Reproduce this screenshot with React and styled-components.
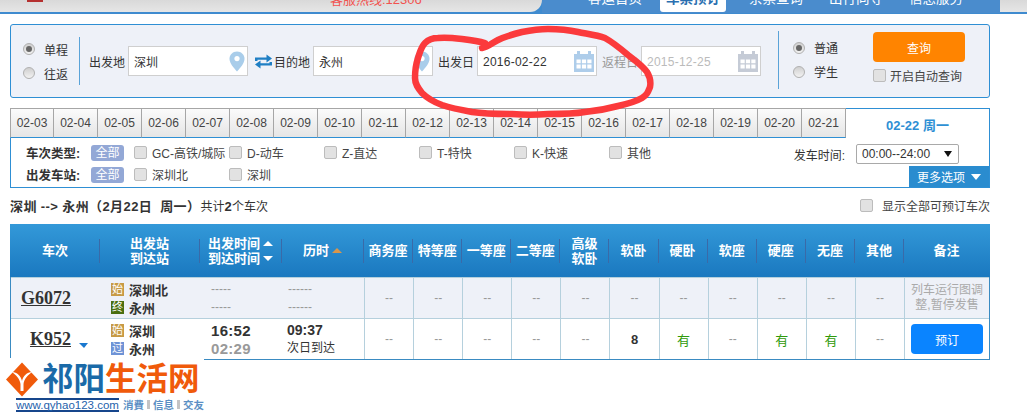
import React from 'react';
import styled, { createGlobalStyle } from 'styled-components';

const GlobalStyle = createGlobalStyle`
  html, body {
    margin: 0;
    padding: 0;
    background: #fff;
    overflow: hidden;
  }
  body {
    font-family: "Liberation Sans", "Noto Sans CJK SC", sans-serif;
    font-size: 12px;
    color: #333;
  }
  * { box-sizing: border-box; }
`;

const Page = styled.div`
  position: relative;
  width: 1027px;
  height: 418px;
  overflow: hidden;
`;

/* top bar, cut off by the top of the screenshot */
const TopBar = styled.div`
  display: flex;
  height: 14px;
  background: #3f8bcf;
`;
const Brand = styled.div`
  display: flex;
  width: 542px;
  height: 12px;
  background: linear-gradient(#d9d9d9, #e6e6e6);
  border-bottom-right-radius: 14px;
  overflow: hidden;
`;
const BrandMark = styled.span`
  width: 16px;
  height: 2px;
  margin-left: 27px;
  background: #b5302f;
`;
const Hotline = styled.span`
  display: block;
  margin: -10px 0 0 287px;
  font-size: 13px;
  line-height: 20px;
  color: #f2524f;
  white-space: nowrap;
`;
const Nav = styled.div`
  display: flex;
  flex: none;
  width: 458px;
  height: 13px;
  padding-left: 46px;
  gap: 26px;
  background: #4a8ccd;
`;
const NavItem = styled.div`
  height: ${p => (p.$active ? '12px' : '13px')};
  overflow: hidden;
  padding: ${p => (p.$active ? '0 6px' : '0')};
  margin: ${p => (p.$active ? '0 -3px 0 -8px' : '0')};
  background: ${p => (p.$active ? '#fff' : 'transparent')};
  border-radius: 0 0 3px 3px;
  color: ${p => (p.$active ? '#2a6fb0' : '#fff')};
  font-weight: ${p => (p.$active ? 'bold' : 'normal')};
  span {
    display: block;
    margin-top: -11px;
    font-size: 13.5px;
    line-height: 20px;
    white-space: nowrap;
  }
`;
const TopTail = styled.div`
  flex: 1;
  height: 12px;
  background: linear-gradient(#d9d9d9, #e6e6e6);
`;

const Content = styled.div`
  width: 980px;
  margin: 10px 0 0 10px;
`;

/* search panel */
const SearchPanel = styled.div`
  display: flex;
  align-items: center;
  height: 74px;
  background: #eef1f8;
  border: 1px solid #2e8fd4;
  border-radius: 3px;
`;
const RadioCol = styled.div`
  display: flex;
  flex: none;
  flex-direction: column;
  justify-content: center;
  gap: 11px;
  width: ${p => p.$width}px;
  height: ${p => p.$height}px;
  padding-left: ${p => p.$pad}px;
  margin-top: ${p => p.$top || 0}px;
  border-right: ${p => (p.$line ? '1px solid #5aa3d8' : '0')};
  border-left: ${p => (p.$lineLeft ? '1px solid #5aa3d8' : '0')};
  margin-left: ${p => p.$left || 0}px;
`;
const RadioRow = styled.label`
  display: flex;
  align-items: center;
  gap: 9px;
  height: 13px;
  font-size: 12px;
`;
const Radio = styled.span`
  display: flex;
  align-items: center;
  justify-content: center;
  width: 12px;
  height: 12px;
  border-radius: 50%;
  border: 1px solid #b0b0b0;
  background: linear-gradient(#cfcfcf, #f2f2f2);
  &::after {
    content: '';
    width: 6px;
    height: 6px;
    border-radius: 50%;
    background: ${p => (p.$on ? '#666' : 'transparent')};
  }
`;
const FieldLabel = styled.span`
  flex: none;
  width: 36px;
  margin-left: ${p => p.$left}px;
  font-size: 12px;
  white-space: nowrap;
  color: ${p => (p.$muted ? '#999' : '#333')};
`;
const InputBox = styled.div`
  display: flex;
  flex: none;
  align-items: center;
  justify-content: space-between;
  width: 120px;
  height: 30px;
  margin-left: 3px;
  padding: 0 2px 0 5px;
  background: #fff;
  border: 1px solid #cfcfcf;
  font-size: 12px;
  letter-spacing: ${p => (p.$date ? '0.25px' : '0')};
  color: ${p => (p.$muted ? '#bbb' : '#333')};
`;
const InputText = styled.span`
  margin-top: 1px;
`;
const SwapButton = styled.svg`
  flex: none;
  width: 17px;
  height: 15px;
  margin-left: 7px;
`;
const QueryCol = styled.div`
  display: flex;
  flex: none;
  flex-direction: column;
  gap: 7px;
  margin-top: -8px;
  width: 92px;
`;
const QueryButton = styled.button`
  width: 92px;
  height: 30px;
  border: 0;
  border-radius: 4px;
  background: #ff8400;
  color: #fff;
  font: 12px "Liberation Sans", "Noto Sans CJK SC", sans-serif;
`;
const CheckRow = styled.label`
  display: flex;
  align-items: center;
  gap: ${p => p.$gap || 5}px;
  width: ${p => p.$width || 'auto'};
  height: 13px;
  white-space: nowrap;
  font-size: 12px;
  color: #444;
`;
const Check = styled.span`
  flex: none;
  width: 13px;
  height: 13px;
  background: #e2e2e2;
  border: 1px solid #bcbcbc;
  border-radius: 2px;
`;

/* date tabs and filters */
const DatePanel = styled.div`
  margin-top: 10px;
`;
const TabRow = styled.div`
  display: flex;
  height: 30px;
`;
const DateTab = styled.div`
  display: flex;
  flex: none;
  align-items: center;
  justify-content: center;
  width: 44px;
  background: linear-gradient(#fbfbfb, #e5e5e5);
  border-top: 1px solid #a6a6a6;
  border-right: 1px solid #a6a6a6;
  border-bottom: 1px solid #2e8fd4;
  font-size: 12px;
  color: #444;
  &:first-child { border-left: 1px solid #a6a6a6; }
`;
const ActiveTab = styled.div`
  flex: 1;
  padding-top: 6px;
  text-align: center;
  background: #fff;
  border-top: 1px solid #2e8fd4;
  border-right: 1px solid #2e8fd4;
  font-size: 13px;
  font-weight: bold;
  color: #2e8fd4;
`;
const FilterBox = styled.div`
  display: flex;
  justify-content: space-between;
  height: 50px;
  border: 1px solid #2e8fd4;
  border-top: 0;
`;
const FilterLeft = styled.div`
  display: flex;
  flex-direction: column;
  gap: 5px;
  padding: 6px 0 0 15px;
`;
const FilterRow = styled.div`
  display: flex;
  align-items: center;
  height: 17px;
`;
const FilterName = styled.span`
  width: 65px;
  font-size: 12.5px;
  font-weight: bold;
  white-space: nowrap;
`;
const AllBadge = styled.span`
  width: 33px;
  height: 16px;
  margin-right: 10px;
  border-radius: 3px;
  background: #93a8d6;
  color: #fff;
  line-height: 16px;
  text-align: center;
  font-size: 12px;
`;
const FilterRight = styled.div`
  display: flex;
  flex-direction: column;
  align-items: flex-end;
  justify-content: space-between;
  padding-top: 6px;
`;
const TimeRow = styled.div`
  display: flex;
  align-items: center;
  gap: 11px;
  margin-right: 30px;
`;
const TimeSelect = styled.div`
  display: flex;
  align-items: center;
  justify-content: space-between;
  width: 103px;
  height: 20px;
  padding: 0 6px 0 5px;
  background: #fff;
  border: 1px solid #a9a9a9;
  border-radius: 2px;
  font-size: 12px;
  color: #333;
  i {
    width: 0;
    height: 0;
    border-left: 4px solid transparent;
    border-right: 4px solid transparent;
    border-top: 6px solid #111;
  }
`;
const MoreButton = styled.div`
  display: flex;
  align-items: center;
  justify-content: center;
  gap: 6px;
  width: 80px;
  height: 21px;
  background: #2a8ccf;
  color: #fff;
  font-size: 12px;
  i {
    width: 0;
    height: 0;
    border-left: 5px solid transparent;
    border-right: 5px solid transparent;
    border-top: 6px solid #fff;
  }
`;

const Summary = styled.div`
  display: flex;
  align-items: center;
  justify-content: space-between;
  height: 36px;
  padding-bottom: 1px;
  font-size: 12px;
  b { font-size: 13px; letter-spacing: 0.4px; }
`;

/* result table */
const columns = '89px 100px 82px 82px repeat(11, 49.1px) 1fr';
const Table = styled.div`
  border: 1px solid #3a8bc2;
  border-top: 0;
`;
const HeadRow = styled.div`
  display: grid;
  grid-template-columns: ${columns};
  align-items: center;
  height: 53px;
  margin: 0 -1px;
  padding: 0 1px;
  background: linear-gradient(#3399d9, #1a78bf);
`;
const HeadCell = styled.div`
  display: flex;
  align-items: center;
  justify-content: center;
  gap: 3px;
  height: 24px;
  border-right: ${p => (p.$last ? '0' : '1px solid #3a6aa8')};
  font-size: 13px;
  font-weight: bold;
  line-height: 15px;
  color: #fff;
  text-align: center;
`;
const SortLines = styled.div`
  display: flex;
  flex-direction: column;
`;
const SortLine = styled.span`
  display: flex;
  align-items: center;
  gap: 3px;
  white-space: nowrap;
`;
const Triangle = styled.i`
  width: 0;
  height: 0;
  border-left: 5px solid transparent;
  border-right: 5px solid transparent;
  border-bottom: ${p => (p.$down ? '0' : `5px solid ${p.$color || '#fff'}`)};
  border-top: ${p => (p.$down ? `5px solid ${p.$color || '#fff'}` : '0')};
`;
const Row = styled.div`
  display: grid;
  grid-template-columns: ${columns};
  height: 41px;
  background: ${p => (p.$shade ? '#eef1f8' : '#fff')};
  border-top: 1px solid #b5d0dd;
`;
const TrainCell = styled.div`
  display: flex;
  align-items: center;
  justify-content: flex-end;
  gap: 8px;
  padding-right: 12px;
`;
const TrainNo = styled.a`
  font-family: "Liberation Serif", serif;
  font-size: 18px;
  font-weight: bold;
  color: #333;
  text-decoration: underline;
`;
const TrainArrow = styled.i`
  width: 0;
  height: 0;
  margin-top: 13px;
  border-left: 5px solid transparent;
  border-right: 4px solid transparent;
  border-top: 5px solid #1a78cf;
  visibility: ${p => (p.$hidden ? 'hidden' : 'visible')};
`;
const StationCell = styled.div`
  display: flex;
  flex-direction: column;
  justify-content: center;
  gap: 5px;
  padding-left: 11px;
`;
const Station = styled.div`
  display: flex;
  align-items: center;
  gap: 5px;
  height: 13px;
  font-size: 13px;
  font-weight: bold;
  color: #333;
`;
const StationTag = styled.span`
  width: 13px;
  height: 13px;
  background: ${p => p.$color};
  color: #fff;
  font-size: 11px;
  font-weight: normal;
  line-height: 13px;
  text-align: center;
`;
const TimeCell = styled.div`
  display: flex;
  flex-direction: column;
  justify-content: center;
  gap: 3px;
  padding-left: ${p => p.$pad}px;
`;
const TimeText = styled.div`
  height: 15px;
  font-size: ${p => p.$size || 12}px;
  font-weight: ${p => (p.$bold ? 'bold' : 'normal')};
  line-height: 15px;
  letter-spacing: ${p => (p.$size === 15 ? '0.3px' : '0')};
  color: ${p => p.$color || '#333'};
`;
const SeatCell = styled.div`
  display: flex;
  align-items: center;
  justify-content: center;
  border-left: 1px solid #b5d0dd;
  font-size: ${p => (p.$kind === 'dash' ? '12px' : '13px')};
  font-weight: ${p => (p.$kind === 'num' ? 'bold' : 'normal')};
  color: ${p => (p.$kind === 'yes' ? '#2f9a0a' : p.$kind === 'num' ? '#333' : '#999')};
`;
const NoteCell = styled.div`
  display: flex;
  align-items: center;
  justify-content: center;
  border-left: 1px solid #b5d0dd;
  padding: 0 5px;
  font-size: 12px;
  line-height: 15px;
  color: #aaa;
  text-align: center;
`;
const BookButton = styled.button`
  flex: none;
  width: 72px;
  height: 30px;
  border: 0;
  border-radius: 4px;
  background: #0a84ff;
  color: #fff;
  font: 12px "Liberation Sans", "Noto Sans CJK SC", sans-serif;
`;

/* things that lie over the page: the watermark logo and the red pen circle */
const Watermark = styled.div`
  position: absolute;
  left: 0;
  top: 358px;
  width: 204px;
  height: 60px;
  padding: 3px 0 0 6px;
  background: #fff;
`;
const LogoTop = styled.div`
  display: flex;
  align-items: center;
  gap: 4px;
  height: 36px;
`;
const LogoName = styled.div`
  font-size: 31.5px;
  font-weight: bold;
  line-height: 36px;
  white-space: nowrap;
  color: #1a6aa8;
  span { color: #f05a0a; }
`;
const LogoSub = styled.div`
  display: flex;
  align-items: center;
  gap: 3px;
  margin: 0 0 0 10px;
  font-size: 10.5px;
  font-weight: bold;
  white-space: nowrap;
  color: #5b8fc4;
`;
const LogoUrl = styled.span`
  margin-right: 1px;
  font-size: 11.5px;
  font-weight: normal;
  line-height: 14px;
  color: #1f62ac;
  background: linear-gradient(#16468c 0 2px, #fff 2px 12px, #16468c 12px);
`;
const LogoSep = styled.i`
  width: 3px;
  height: 9px;
  background: #c4c4c4;
`;
const PenCircle = styled.svg`
  position: absolute;
  left: 0;
  top: 0;
  pointer-events: none;
`;

const PinIcon = () => (
  <svg width="16" height="21" viewBox="0 0 16 21">
    <path d="M8 0.5C3.6 0.5 0.5 3.8 0.5 7.8c0 4.6 4.6 9.6 7.500 12.700 2.900-3.100 7.500-8.100 7.500-12.700C15.500 3.800 12.400 0.500 8 0.500z" fill="#a9cdea" />
    <circle cx="8" cy="7.600" r="2.600" fill="#fff" />
  </svg>
);

const CalendarIcon = ({ color }) => (
  <svg width="20" height="21" viewBox="0 0 20 21">
    <path d="M0 3h3V0h3v3h8V0h3v3h3v18H0z" fill={color} />
    <path d="M2.500 8.500h4.200v3.800H2.500zM7.900 8.500h4.200v3.800H7.900zM13.300 8.500h4.200v3.800h-4.200zM2.500 13.600h4.200v3.800H2.500zM7.900 13.600h4.200v3.800H7.900zM13.300 13.600h4.200v3.800h-4.200z" fill="#fff" />
  </svg>
);

const SwapIcon = () => (
  <SwapButton viewBox="0 0 17 15">
    <path d="M0 7V3.500h11.500V0.500L17 4.500l-5.500 4V5.800H2.500V7z" fill="#1f7fc4" />
    <path d="M17 8v3.500H5.500v3L0 10.500l5.500-4v2.700h9V8z" fill="#1f7fc4" />
  </SwapButton>
);

const LogoMark = () => (
  <svg width="32" height="35" viewBox="0 0 32 35">
    <path d="M16 0.500L32 17.500 16 34.500 0 17.500z" fill="#f05a0a" />
    <path d="M6 10c5 0 9 4 10 9 1-5 5-9 10-9-4 3-8 7-8.500 12v7h-3v-7C14 17 10 13 6 10z" fill="#fff" />
  </svg>
);

const dates = ['02-03', '02-04', '02-05', '02-06', '02-07', '02-08', '02-09', '02-10', '02-11', '02-12', '02-13', '02-14', '02-15', '02-16', '02-17', '02-18', '02-19', '02-20', '02-21'];
const trainTypes = ['GC-高铁/城际', 'D-动车', 'Z-直达', 'T-特快', 'K-快速', '其他'];
const seatHeads = ['商务座', '特等座', '一等座', '二等座', ['高级', '软卧'], '软卧', '硬卧', '软座', '硬座', '无座', '其他'];
const navItems = ['客运首页', '车票预订', '余票查询', '出行向导', '信息服务'];

const seatKind = v => (v === '--' ? 'dash' : v === '有' ? 'yes' : 'num');

const Seats = ({ values }) =>
  values.map((v, i) => (
    <SeatCell key={i} $kind={seatKind(v)}>{v}</SeatCell>
  ));

export default function App() {
  return (
    <Page>
      <GlobalStyle />
      <TopBar>
        <Brand>
          <BrandMark />
          <Hotline>客服热线:12306</Hotline>
        </Brand>
        <Nav>
          {navItems.map((n, i) => (
            <NavItem key={n} $active={i === 1}><span>{n}</span></NavItem>
          ))}
        </Nav>
        <TopTail />
      </TopBar>

      <Content>
        <SearchPanel>
          <RadioCol $width={69} $height={48} $pad={12} $line>
            <RadioRow><Radio $on />单程</RadioRow>
            <RadioRow><Radio />往返</RadioRow>
          </RadioCol>
          <FieldLabel $left={9}>出发地</FieldLabel>
          <InputBox><InputText>深圳</InputText><PinIcon /></InputBox>
          <SwapIcon />
          <FieldLabel $left={2}>目的地</FieldLabel>
          <InputBox><InputText>永州</InputText><PinIcon /></InputBox>
          <FieldLabel $left={5}>出发日</FieldLabel>
          <InputBox $date><InputText>2016-02-22</InputText><CalendarIcon color="#aecdea" /></InputBox>
          <FieldLabel $left={5} $muted>返程日</FieldLabel>
          <InputBox $date $muted><InputText>2015-12-25</InputText><CalendarIcon color="#c5cbd6" /></InputBox>
          <RadioCol $width={95} $height={58} $pad={14} $top={-3} $left={17} $lineLeft>
            <RadioRow><Radio $on />普通</RadioRow>
            <RadioRow><Radio />学生</RadioRow>
          </RadioCol>
          <QueryCol>
            <QueryButton>查询</QueryButton>
            <CheckRow $gap={4}><Check />开启自动查询</CheckRow>
          </QueryCol>
        </SearchPanel>

        <DatePanel>
          <TabRow>
            {dates.map(d => <DateTab key={d}>{d}</DateTab>)}
            <ActiveTab>02-22 周一</ActiveTab>
          </TabRow>
          <FilterBox>
            <FilterLeft>
              <FilterRow>
                <FilterName>车次类型:</FilterName>
                <AllBadge>全部</AllBadge>
                {trainTypes.map(t => (
                  <CheckRow key={t} $width="95px"><Check />{t}</CheckRow>
                ))}
              </FilterRow>
              <FilterRow>
                <FilterName>出发车站:</FilterName>
                <AllBadge>全部</AllBadge>
                <CheckRow $width="95px"><Check />深圳北</CheckRow>
                <CheckRow $width="95px"><Check />深圳</CheckRow>
              </FilterRow>
            </FilterLeft>
            <FilterRight>
              <TimeRow>
                <span>发车时间:</span>
                <TimeSelect>00:00--24:00<i /></TimeSelect>
              </TimeRow>
              <MoreButton>更多选项<i /></MoreButton>
            </FilterRight>
          </FilterBox>
        </DatePanel>

        <Summary>
          <span><b>深圳 --&gt; 永州（2月22日&nbsp; 周一）</b>共计<b>2</b>个车次</span>
          <CheckRow $gap={9}><Check />显示全部可预订车次</CheckRow>
        </Summary>

        <Table>
          <HeadRow>
            <HeadCell>车次</HeadCell>
            <HeadCell>出发站<br />到达站</HeadCell>
            <HeadCell>
              <SortLines>
                <SortLine>出发时间<Triangle /></SortLine>
                <SortLine>到达时间<Triangle $down /></SortLine>
              </SortLines>
            </HeadCell>
            <HeadCell>历时<Triangle $color="#d9964a" /></HeadCell>
            {seatHeads.map((h, i) => (
              <HeadCell key={i}>
                {Array.isArray(h) ? <span>{h[0]}<br />{h[1]}</span> : h}
              </HeadCell>
            ))}
            <HeadCell $last>备注</HeadCell>
          </HeadRow>

          <Row $shade>
            <TrainCell><TrainNo>G6072</TrainNo><TrainArrow $hidden /></TrainCell>
            <StationCell>
              <Station><StationTag $color="#c79a45">始</StationTag>深圳北</Station>
              <Station><StationTag $color="#4a6e10">终</StationTag>永州</Station>
            </StationCell>
            <TimeCell $pad={11}>
              <TimeText $color="#999">-----</TimeText>
              <TimeText $color="#999">-----</TimeText>
            </TimeCell>
            <TimeCell $pad={6}>
              <TimeText $color="#999">------</TimeText>
              <TimeText $color="#999">------</TimeText>
            </TimeCell>
            <Seats values={['--', '--', '--', '--', '--', '--', '--', '--', '--', '--', '--']} />
            <NoteCell>列车运行图调整,暂停发售</NoteCell>
          </Row>

          <Row>
            <TrainCell><TrainNo>K952</TrainNo><TrainArrow /></TrainCell>
            <StationCell>
              <Station><StationTag $color="#c79a45">始</StationTag>深圳</Station>
              <Station><StationTag $color="#6e93d6">过</StationTag>永州</Station>
            </StationCell>
            <TimeCell $pad={11}>
              <TimeText $bold $size={15}>16:52</TimeText>
              <TimeText $bold $size={15} $color="#999">02:29</TimeText>
            </TimeCell>
            <TimeCell $pad={5}>
              <TimeText $bold $size={14}>09:37</TimeText>
              <TimeText>次日到达</TimeText>
            </TimeCell>
            <Seats values={['--', '--', '--', '--', '--', '8', '有', '--', '有', '有', '--']} />
            <NoteCell><BookButton>预订</BookButton></NoteCell>
          </Row>
        </Table>
      </Content>

      <Watermark>
        <LogoTop>
          <LogoMark />
          <LogoName>祁阳<span>生活网</span></LogoName>
        </LogoTop>
        <LogoSub>
          <LogoUrl>www.qyhao123.com</LogoUrl>
          消費<LogoSep />信息<LogoSep />交友
        </LogoSub>
      </Watermark>

      <PenCircle width="1027" height="418" viewBox="0 0 1027 418">
        <path
          d="M482 48C488 47 492 43 498 40C506 36 514 34 522 32C532 30 540 29 548 29C560 29 569 30 578 32C588 34 597 35 605 38C614 43 621 49 628 55C636 61 643 66 647 72C650 77 651 82 650 87C648 92 647 95 642 98C635 102 627 104 618 106C607 109 596 111 585 112C573 114 560 114 548 114C536 115 524 115 512 114C498 114 485 114 472 112C461 110 451 108 442 105C434 102 427 98 422 93C418 88 415 84 415 78C415 71 416 64 418 58C420 52 421 47 425 43C428 40 433 38 438 38C446 37 454 38 462 39C470 40 478 41 485 43"
          fill="none"
          stroke="#fb3a3c"
          strokeWidth="6.5"
          strokeLinecap="round"
          strokeLinejoin="round"
        />
      </PenCircle>
    </Page>
  );
}
